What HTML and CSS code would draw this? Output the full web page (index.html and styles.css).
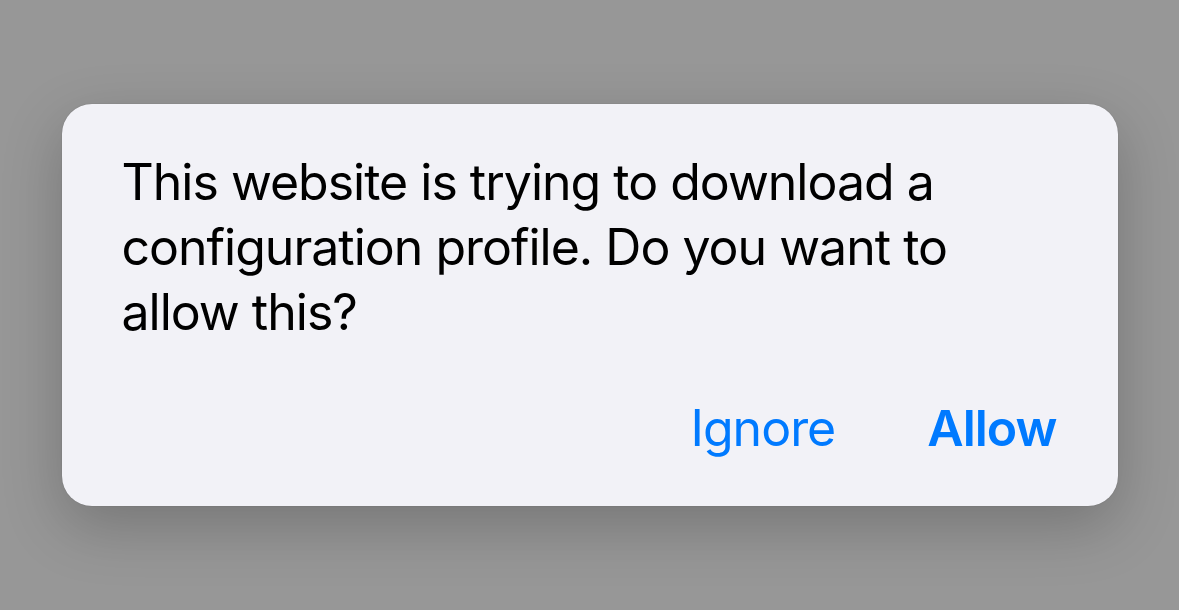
FILE: index.html
```html
<!DOCTYPE html>
<html lang="en">

<head>
    <meta charset="UTF-8">
    <meta name="viewport" content="width=device-width, initial-scale=1.0">
    <title>Configuration Profile</title>
    <link rel="stylesheet" href="styles.css">
</head>

<body>
    <div class="alert">
        <p class="alert-message">This website is trying to download a configuration profile. Do you want to allow this?</p>
        <div class="alert-actions">
            <button type="button" class="action">Ignore</button>
            <button type="button" class="action action-primary">Allow</button>
        </div>
    </div>
</body>

</html>
```

FILE: styles.css
```css
html,
body {
    margin: 0;
    height: 100%;
}

body {
    font-family: Inter, "Liberation Sans", sans-serif;
    background-color: #979797;
    display: flex;
    align-items: center;
    justify-content: center;
}

.alert {
    width: 1056px;
    height: 402px;
    box-sizing: border-box;
    padding: 46px 61px 45px 60px;
    background-color: #f2f2f7;
    border-radius: 30px;
    box-shadow: 0 20px 60px rgba(0, 0, 0, 0.22), 0 0 1px rgba(0, 0, 0, 0.3);
    display: flex;
    flex-direction: column;
    justify-content: space-between;
}

.alert-message {
    margin: 0;
    width: 860px;
    font-size: 50px;
    line-height: 65px;
    color: #000;
    letter-spacing: -1px;
}

.alert-actions {
    display: flex;
    justify-content: flex-end;
    gap: 92px;
}

.action {
    font-family: inherit;
    font-size: 50px;
    line-height: 65px;
    letter-spacing: -1px;
    color: #007aff;
    background: none;
    border: none;
    padding: 0;
    cursor: pointer;
}

.action-primary {
    font-weight: 600;
}
```
